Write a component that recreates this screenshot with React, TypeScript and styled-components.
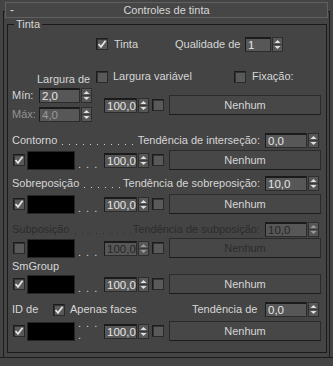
import React from "react";
import styled, { createGlobalStyle } from "styled-components";

const Global = createGlobalStyle`
body {
  margin: 0;
  background: #444444;
  font-family: "Liberation Sans", Arial, sans-serif;
  font-size: 11px;
  color: #d6d6d6;
}
`;

const Page = styled.div`
width: 333px;
height: 366px;
background: #444444;
display: flex;
flex-direction: column;
overflow: hidden;
`;

const Rollout = styled.div`
margin: 11px 3px 0 3px;
height: 346px;
box-sizing: border-box;
border: 1px solid #1c1c1c;
border-bottom: none;
display: flex;
flex-direction: column;
`;

const BottomRule = styled.div`
height: 1px;
background: #1c1c1c;
`;

const Header = styled.div`
margin: -10px 1px 0 1px;
height: 16px;
box-sizing: border-box;
border: 1px solid #606060;
background: #464646;
display: flex;
align-items: center;
line-height: 14px;
`;

const Collapse = styled.span`
width: 14px;
padding-left: 4px;
font-size: 12px;
`;

const Title = styled.span`
flex: 1;
text-align: center;
padding-right: 18px;
`;

const Group = styled.div`
margin: 6px 2px 0 3px;
height: 329px;
box-sizing: border-box;
border: 1px solid #1a1a1a;
display: flex;
flex-direction: column;
`;

const Caption = styled.div`
align-self: flex-start;
margin: -7px 0 0 6px;
padding: 0 2px;
line-height: 13px;
background: #444444;
`;

const Row = styled.div<{ $top: number; $h: number }>`
display: flex;
align-items: center;
margin-top: ${({ $top }) => $top}px;
height: ${({ $h }) => $h}px;
`;

const Label = styled.span<{ $w?: number; $ml?: number; $dim?: boolean; $off?: boolean; $dy?: number }>`
flex: none;
width: ${({ $w }) => ($w ? `${$w}px` : "auto")};
margin-left: ${({ $ml }) => $ml || 0}px;
white-space: nowrap;
line-height: 13px;
color: ${({ $dim, $off }) => ($off ? "#2c2c2c" : $dim ? "#939393" : "#d6d6d6")};
transform: translateY(${({ $dy }) => $dy || 0}px);
`;

/* dotted leader between a section name and its bias label */
const Leader = styled.span<{ $off?: boolean }>`
flex: 1;
align-self: stretch;
margin: 0 1px 0 4px;
background-image: linear-gradient(to right, ${({ $off }) => ($off ? "#2c2c2c" : "#cfcfcf")} 1px, transparent 1px);
background-size: 7px 1px;
background-repeat: repeat-x;
background-position: 1px 11px;
`;

const Box = styled.span<{ $ml?: number }>`
flex: none;
width: 12px;
height: 12px;
margin-left: ${({ $ml }) => $ml || 0}px;
box-sizing: border-box;
border: 1px solid #1c1c1c;
border-right-color: #2a2a2a;
border-bottom-color: #2a2a2a;
background: #595959;
box-shadow: inset 1px 1px 0 #333333;
display: flex;
align-items: center;
justify-content: center;
`;

const Tick = () => (
  <svg width="10" height="10" viewBox="0 0 10 10">
    <polyline points="1.5,5 4,7.8 8.6,1.8" fill="none" stroke="#e4e4e4" strokeWidth="1.8" />
  </svg>
);

const Check = ({ on, ml }: { on?: boolean; ml?: number }) => <Box $ml={ml}>{on && <Tick />}</Box>;

const SpinWrap = styled.span<{ $ml?: number }>`
flex: none;
display: flex;
align-items: stretch;
height: 15px;
margin-left: ${({ $ml }) => $ml || 0}px;
`;

const Field = styled.span<{ $w: number; $dim?: boolean; $off?: boolean }>`
width: ${({ $w }) => $w}px;
box-sizing: border-box;
border: 1px solid #1b1b1b;
border-right-color: #2c2c2c;
border-bottom-color: #2c2c2c;
border-top-width: 2px;
background: #575757;
padding-left: 2px;
line-height: 12px;
font-size: 11.5px;
white-space: nowrap;
color: ${({ $dim, $off }) => ($off ? "#262626" : $dim ? "#9a9a9a" : "#e6e6e6")};
overflow: hidden;
`;

const Arrows = styled.span`
width: 11px;
margin-left: 1px;
box-sizing: border-box;
border: 1px solid #2e2e2e;
background: #575757;
display: flex;
`;

const Spinner = ({ value, w, ml, dim, off }: { value: string; w: number; ml?: number; dim?: boolean; off?: boolean }) => (
  <SpinWrap $ml={ml}>
    <Field $w={w} $dim={dim} $off={off}>{value}</Field>
    <Arrows>
      <svg width="9" height="13" viewBox="0 0 9 13">
        <polygon points="1.5,5 7.5,5 4.5,2" fill={off ? "#9a9a9a" : "#e0e0e0"} />
        <line x1="0" y1="6.5" x2="9" y2="6.5" stroke="#3a3a3a" />
        <polygon points="1.5,8 7.5,8 4.5,11" fill={off ? "#9a9a9a" : "#e0e0e0"} />
      </svg>
    </Arrows>
  </SpinWrap>
);

const Swatch = styled.span`
flex: none;
width: 48px;
height: 19px;
margin-left: 2px;
box-sizing: border-box;
border: 1px solid #262626;
background: #000000;
`;

const Dots = styled.span<{ $w: number }>`
flex: none;
width: ${({ $w }) => $w}px;
align-self: flex-end;
padding-left: 3px;
box-sizing: border-box;
line-height: 12px;
letter-spacing: 1px;
color: #d6d6d6;
`;

const Button = styled.span<{ $off?: boolean }>`
flex: none;
width: 152px;
height: 20px;
margin-left: 5px;
box-sizing: border-box;
border: 1px solid #2a2a2a;
border-bottom-color: #1c1c1c;
background: #474747;
display: flex;
align-items: center;
justify-content: center;
color: ${({ $off }) => ($off ? "#2c2c2c" : "#d6d6d6")};
`;

const MinMax = styled.div`
display: flex;
flex-direction: column;
gap: 4px;
`;

const Gap = styled.span<{ $w: number }>`
flex: none;
width: ${({ $w }) => $w}px;
`;

const MapRow = ({ on, top, off, dots = ". . ." }: { on?: boolean; top: number; off?: boolean; dots?: string }) => (
  <Row $top={top} $h={20}>
    <Check on={on} ml={5} />
    <Swatch />
    <Dots $w={29}>{dots}</Dots>
    <Spinner value="100,0" w={33} off={off} />
    <Check ml={3} />
    <Button $off={off}>Nenhum</Button>
  </Row>
);

const TitleRow = ({ name, bias, value, top, off }: { name: string; bias: string; value: string; top: number; off?: boolean }) => (
  <Row $top={top} $h={15}>
    <Label $off={off} $ml={4}>{name}</Label>
    <Leader $off={off} />
    <Label $off={off}>{bias}</Label>
    <Spinner value={value} w={42} ml={5} off={off} />
    <Gap $w={7} />
  </Row>
);

export default function App() {
  return (
    <Page>
      <Global />
      <Rollout>
        <Header>
          <Collapse>-</Collapse>
          <Title>Controles de tinta</Title>
        </Header>
        <Group>
          <Caption>Tinta</Caption>

          <Row $top={5} $h={16}>
            <Check on ml={88} />
            <Label $w={61} $ml={6}>Tinta</Label>
            <Label $w={70}>Qualidade de</Label>
            <Spinner value="1" w={26} />
          </Row>

          <Row $top={18} $h={13}>
            <Label $w={59} $ml={29} $dy={3}>Largura de</Label>
            <Check />
            <Label $w={121} $ml={5}>Largura variável</Label>
            <Check />
            <Label $ml={6}>Fixação:</Label>
          </Row>

          <Row $top={5} $h={34}>
            <MinMax>
              <Row $top={0} $h={15}>
                <Label $w={27} $ml={4}>Mín:</Label>
                <Spinner value="2,0" w={41} />
              </Row>
              <Row $top={0} $h={15}>
                <Label $w={27} $ml={4} $dim>Máx:</Label>
                <Spinner value="4,0" w={41} dim />
              </Row>
            </MinMax>
            <Spinner value="100,0" w={33} ml={12} />
            <Check ml={3} />
            <Button>Nenhum</Button>
          </Row>

          <TitleRow top={11} name="Contorno" bias="Tendência de interseção:" value="0,0" />
          <MapRow top={2} on />

          <TitleRow top={6} name="Sobreposição" bias="Tendência de sobreposição:" value="10,0" />
          <MapRow top={3} on />

          <TitleRow top={8} name="Subposição" bias="Tendência de subposição:" value="10,0" off />
          <MapRow top={1} off />

          <Row $top={1} $h={15}>
            <Label $ml={4}>SmGroup</Label>
          </Row>
          <MapRow top={0} on />

          <Row $top={8} $h={15}>
            <Label $w={41} $ml={4}>ID de</Label>
            <Check on />
            <Label $w={122} $ml={5}>Apenas faces</Label>
            <Label $w={65}>Tendência de</Label>
            <Spinner value="0,0" w={42} ml={8} />
          </Row>
          <MapRow top={4} on dots=". . . ." />
        </Group>
      </Rollout>
      <BottomRule />
    </Page>
  );
}
